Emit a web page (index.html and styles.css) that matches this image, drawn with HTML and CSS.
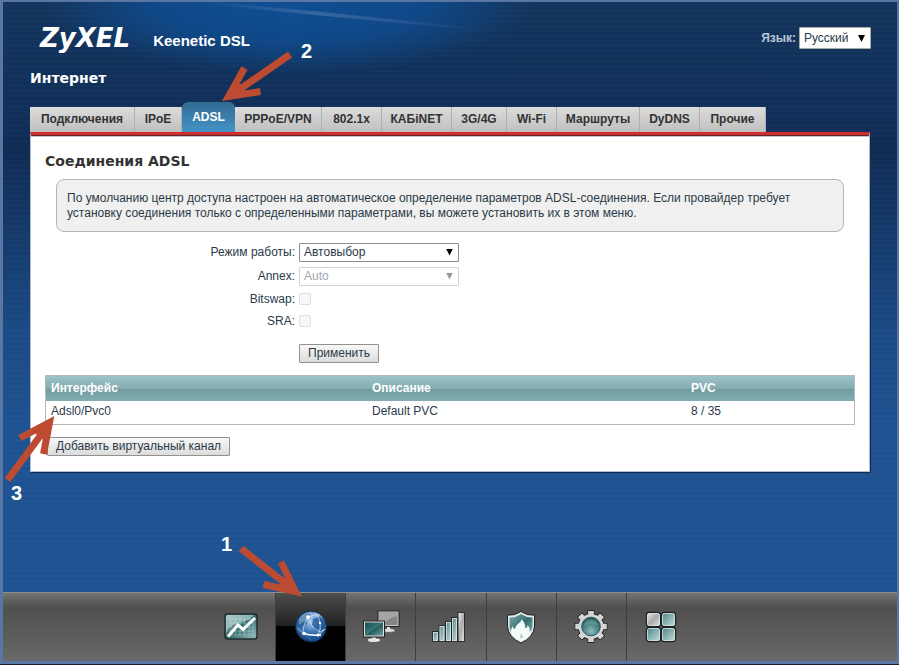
FILE: index.html
```html
<!DOCTYPE html>
<html lang="ru">
<head>
<meta charset="utf-8">
<title>ZyXEL Keenetic DSL</title>
<link rel="stylesheet" href="styles.css">
</head>
<body>
<div class="frame">
  <svg class="glow" viewBox="0 0 540 90" preserveAspectRatio="none" aria-hidden="true">
    <defs>
      <radialGradient id="halo" cx="0.53" cy="0" r="0.46" gradientTransform="scale(1 1.75)">
        <stop offset="0" stop-color="#0f4f94"/>
        <stop offset="0.55" stop-color="#0f4c8f" stop-opacity="0.85"/>
        <stop offset="1" stop-color="#0f4c8f" stop-opacity="0"/>
      </radialGradient>
      <linearGradient id="streak" x1="0" x2="1">
        <stop offset="0" stop-color="#6f8fbd" stop-opacity="0"/>
        <stop offset="0.4" stop-color="#7f94bd" stop-opacity="0.35"/>
        <stop offset="1" stop-color="#6f8fbd" stop-opacity="0"/>
      </linearGradient>
    </defs>
    <rect width="540" height="90" fill="url(#halo)"/>
    <path d="M190 -1 Q320 8 500 30 Q320 15 190 0Z" fill="url(#streak)"/>
  </svg>

  <header class="top">
    <div class="brand">
      <span class="logo">ZyXEL</span>
      <span class="model">Keenetic DSL</span>
    </div>
    <div class="language">
      <label for="lang">Язык:</label>
      <span class="select select-lang"><select id="lang"><option>Русский</option></select></span>
    </div>
  </header>

  <main>
    <h1>Интернет</h1>
    <nav class="tabs">
      <a href="#">Подключения</a>
      <a href="#">IPoE</a>
      <a href="#" class="active">ADSL</a>
      <a href="#">PPPoE/VPN</a>
      <a href="#">802.1x</a>
      <a href="#">КАБiNET</a>
      <a href="#">3G/4G</a>
      <a href="#">Wi-Fi</a>
      <a href="#">Маршруты</a>
      <a href="#">DyDNS</a>
      <a href="#">Прочие</a>
      <span class="note note-two">
        <svg width="80" height="60" viewBox="220 45 80 60"><path d="M290 54.500 L230 96 M244.500 68 L228.500 96.500 L260.500 91.500"/><path class="head" d="M228.500 96.500 L237 81 L243 86 L246 94Z"/></svg>
        <b>2</b>
      </span>
    </nav>

    <section class="panel">
      <h2>Соединения ADSL</h2>
      <p class="hint">По умолчанию центр доступа настроен на автоматическое определение параметров ADSL-соединения. Если провайдер требует установку соединения только с определенными параметрами, вы можете установить их в этом меню.</p>

      <form class="form">
        <label for="mode">Режим работы:</label>
        <span class="select"><select id="mode"><option>Автовыбор</option></select></span>
        <label for="annex">Annex:</label>
        <span class="select off"><select id="annex" disabled><option>Auto</option></select></span>
        <label for="bitswap">Bitswap:</label>
        <input type="checkbox" id="bitswap" disabled>
        <label for="sra">SRA:</label>
        <input type="checkbox" id="sra" disabled>
        <button type="button" class="apply">Применить</button>
      </form>

      <table>
        <thead><tr><th>Интерфейс</th><th>Описание</th><th>PVC</th></tr></thead>
        <tbody><tr><td>Adsl0/Pvc0</td><td>Default PVC</td><td>8 / 35</td></tr></tbody>
      </table>
      <div class="actions">
        <button type="button">Добавить виртуальный канал</button>
        <span class="note note-three">
          <svg width="60" height="70" viewBox="0 415 60 70"><path d="M7.500 480 L49 424 M20 438 L49.500 422.500 L43.500 454"/><path class="head" d="M49.500 422.500 L34 431 L39 438 L46 440Z"/></svg>
          <b>3</b>
        </span>
      </div>
    </section>
  </main>

  <footer class="dock">
    <svg class="defs" width="0" height="0" aria-hidden="true">
      <defs>
        <linearGradient id="teal" x1="0" y1="0" x2="1" y2="1"><stop offset="0" stop-color="#7fa9a9"/><stop offset="0.5" stop-color="#326c6e"/><stop offset="1" stop-color="#9bc4c2"/></linearGradient>
        <linearGradient id="screen" x1="0" y1="0" x2="1" y2="1"><stop offset="0" stop-color="#174c4f"/><stop offset="0.5" stop-color="#38797a"/><stop offset="0.52" stop-color="#23585a"/><stop offset="1" stop-color="#6ba09f"/></linearGradient>
        <linearGradient id="gray" x1="0" y1="0" x2="1" y2="1"><stop offset="0" stop-color="#eee"/><stop offset="0.5" stop-color="#aaa"/><stop offset="1" stop-color="#e2e2e2"/></linearGradient>
        <linearGradient id="tile" x1="0" y1="0" x2="1" y2="1"><stop offset="0" stop-color="#4d8687"/><stop offset="1" stop-color="#c3dddb"/></linearGradient>
        <radialGradient id="globe" cx="0.5" cy="0.35" r="0.65"><stop offset="0" stop-color="#a9cdf2"/><stop offset="0.5" stop-color="#3f78b8"/><stop offset="1" stop-color="#123c73"/></radialGradient>
        <radialGradient id="lens" cx="0.5" cy="0.75" r="0.7"><stop offset="0" stop-color="#8fbcbb"/><stop offset="0.6" stop-color="#478081"/><stop offset="1" stop-color="#25595b"/></radialGradient>
      </defs>
    </svg>
    <nav class="dock-items">
      <a href="#" aria-label="Монитор">
        <svg class="icon" viewBox="0 0 40 40">
          <rect x="4" y="7" width="32" height="25" rx="2.500" fill="url(#teal)" stroke="#222b2b" stroke-width="1.500"/>
          <path d="M5 27V10Q5 8 7 8H33Q28 14 18 16T5 27Z" fill="#dff0ef" opacity="0.5"/>
          <path d="M10 11V28M14.500 11V28M19 11V28M23.500 11V28M28 11V28M32 11V28M8 12H33M8 16H33M8 20H33M8 24H33M8 28H33" stroke="#d2e5e4" stroke-width="0.6" opacity="0.6"/>
          <path d="M7 29.500L17 18L22 22.500L34 11" fill="none" stroke="#fff" stroke-width="3"/>
        </svg>
      </a>
      <a href="#" class="current" aria-label="Интернет">
        <svg class="icon" viewBox="0 0 40 40">
          <circle cx="20" cy="19.500" r="15.500" fill="url(#globe)" stroke="#0d2b52"/>
          <path d="M7 14Q11 6 18 6L20 9L15 13L16 17L10 20L7 19ZM22 12L29 10L34 17L33 23L28 21L25 24L21 18Z" fill="#1f568f" opacity="0.7"/>
          <path d="M17 10Q24 7 29 8M17 10Q19 20 29 25L34 22M17 10Q10 22 13 27L27 29L34 22M27 29Q33 15 24 6M20 33Q13 27 6 21" fill="none" stroke="#d9ebfb" stroke-width="0.8" opacity="0.85"/>
          <path d="M13 27L27 29L33 27Q28 35 20 34Q13 32 13 27Z" fill="#1c569b" opacity="0.7"/>
          <path d="M12 26Q19 29 30 28" fill="none" stroke="#fff" stroke-width="1.500"/>
          <g fill="#fff"><circle cx="17" cy="10" r="1.800"/><circle cx="13" cy="26.500" r="1.800"/><circle cx="27" cy="28" r="1.500"/><circle cx="29" cy="16" r="1.200"/></g>
          <path d="M8 12Q13 4 21 5Q28 5 32 11Q20 8 8 18Z" fill="#fff" opacity="0.3"/>
        </svg>
      </a>
      <a href="#" aria-label="Домашняя сеть">
        <svg class="icon" viewBox="0 0 40 40">
          <path d="M25.500 18H29.500V21.500Q34 21.500 34 23.500T28 25.500T22 23.500T25.500 21.500Z" fill="#ddd" stroke="#333" stroke-width="0.6"/>
          <rect x="17" y="4" width="21" height="15.500" fill="#c9c9c9" stroke="#222"/>
          <rect x="18.500" y="5.500" width="18" height="12.500" fill="#858585"/>
          <path d="M18.500 5.500H36.500V9Q28 10 22 18H18.500Z" fill="#a5a5a5"/>
          <path d="M11 29H15V31Q19.500 31 19.500 33.200T13 35.500T6.500 33.200T11 31Z" fill="#e6e6e6" stroke="#333" stroke-width="0.6"/>
          <rect x="2.500" y="14" width="21" height="16" fill="#dedede" stroke="#222"/>
          <rect x="4" y="15.500" width="18" height="13" fill="url(#screen)"/>
        </svg>
      </a>
      <a href="#" aria-label="Сеть Wi-Fi">
        <svg class="icon" viewBox="0 0 40 40">
          <g fill="url(#tile)" stroke="#222" stroke-width="1.600" paint-order="stroke">
            <rect x="2" y="25" width="5" height="9"/><rect x="8.500" y="19" width="5" height="15"/><rect x="15" y="15" width="5" height="19"/><rect x="21" y="11" width="5" height="23"/><rect x="27.500" y="6" width="5.500" height="28" fill="url(#gray)"/>
          </g>
          <g fill="none" stroke="#d7e8e7" stroke-width="0.8"><rect x="2.500" y="25.500" width="4" height="8"/><rect x="9" y="19.500" width="4" height="14"/><rect x="15.500" y="15.500" width="4" height="18"/><rect x="21.500" y="11.500" width="4" height="22"/></g>
        </svg>
      </a>
      <a href="#" aria-label="Безопасность">
        <svg class="icon" viewBox="0 0 40 40">
          <path d="M20 4.500Q26 9 33.500 8V19Q33 30 20 36Q7 30 6.500 19V8Q14 9 20 4.500Z" fill="#e4eceb" stroke="#222"/>
          <path d="M20 7Q26 11 31.500 10.500V19Q31 29 20 33.500Q9 29 8.500 19V10.500Q14 11 20 7Z" fill="url(#teal)"/>
          <path d="M12 29Q8 24 12 19Q12 22 14 22Q15 18 18 16Q21 14 20 12Q25 16 24 21Q27 21 26.500 18Q30 22 28 25Q31 23 30 21Q32 30 20 34Q15 33 12 29Z" fill="#f5fafa"/>
          <path d="M20 32Q18 29 20.500 26Q20.500 29 22.500 29Q22 31 20 32Z" fill="#b5cfcd"/>
        </svg>
      </a>
      <a href="#" aria-label="Система">
        <svg class="icon" viewBox="0 0 40 40">
          <g transform="translate(20 19.500)">
            <g fill="#d3d5d5" stroke="#222" stroke-width="1.800" paint-order="stroke">
              <path id="tooth" d="M-3 -10L-2.500 -15.500H2.500L3 -10ZM-3 10L-2.500 15.500H2.500L3 10ZM-10 -3L-15.500 -2.500V2.500L-10 3ZM10 -3L15.500 -2.500V2.500L10 3Z"/>
              <use href="#tooth" transform="rotate(45)"/>
              <circle r="12.500"/>
            </g>
            <path d="M-3 -10L-2.500 -15.500H2.500L3 -10ZM-3 10L-2.500 15.500H2.500L3 10ZM-10 -3L-15.500 -2.500V2.500L-10 3ZM10 -3L15.500 -2.500V2.500L10 3Z" fill="#d3d5d5"/>
            <path d="M-3 -10L-2.500 -15.500H2.500L3 -10ZM-3 10L-2.500 15.500H2.500L3 10ZM-10 -3L-15.500 -2.500V2.500L-10 3ZM10 -3L15.500 -2.500V2.500L10 3Z" fill="#d3d5d5" transform="rotate(45)"/>
            <circle r="9.300" fill="url(#lens)" stroke="#2a5557"/>
            <path d="M-7 -1Q-6 -7 0 -7T7 -1Q0 -4 -7 -1Z" fill="#dff" opacity="0.18"/>
          </g>
        </svg>
      </a>
      <a href="#" aria-label="Приложения">
        <svg class="icon" viewBox="0 0 40 40">
          <g stroke="#202020" stroke-width="2.400" paint-order="stroke" fill="url(#tile)">
            <rect x="6" y="6" width="13" height="13" rx="2.500" fill="url(#gray)"/><rect x="21" y="6" width="13" height="13" rx="2.500"/><rect x="6" y="21" width="13" height="13" rx="2.500"/><rect x="21" y="21" width="13" height="13" rx="2.500"/>
          </g>
          <g fill="none" stroke="#d5e6e5" stroke-width="0.8"><rect x="6.500" y="6.500" width="12" height="12" rx="2"/><rect x="21.500" y="6.500" width="12" height="12" rx="2"/><rect x="6.500" y="21.500" width="12" height="12" rx="2"/><rect x="21.500" y="21.500" width="12" height="12" rx="2"/></g>
        </svg>
      </a>
      <span class="note note-one">
        <svg width="70" height="60" viewBox="235 540 70 60"><path d="M241 548.500 L295 591 M281 562 L295.500 591.500 L263.500 584.500"/><path class="head" d="M295.500 591.500 L288 576 L282 580 L278 588Z"/></svg>
        <b>1</b>
      </span>
    </nav>
  </footer>
</div>
</body>
</html>
```
FILE: styles.css
```css
* { box-sizing: border-box; }

body {
  margin: 0;
  background: #16202e;
  font: 12px/15px "Liberation Sans", Arial, sans-serif;
  color: #2b3a48;
}

.frame {
  position: relative;
  display: flex;
  flex-direction: column;
  min-height: calc(100vh - 1px);
  margin-bottom: 1px;
  border: solid #5a76a2;
  border-width: 2px 2px 3px 3px;
  background:
    repeating-linear-gradient(transparent 0 3px, rgba(255, 255, 255, 0.015) 3px 5px),
    linear-gradient(#13345c 0, #10305a 90px, #0f2c55 150px, #1b4a85 330px, #1e5291 430px, #1e5291 100%);
}

.glow {
  position: absolute;
  top: 0;
  left: 0;
  width: 540px;
  height: 90px;
}

.top {
  position: relative;
  display: flex;
  justify-content: space-between;
  align-items: center;
  padding: 20px 26px 0 37px;
}

.brand {
  display: flex;
  align-items: center;
  gap: 23px;
  color: #fff;
  font-weight: bold;
}

.logo {
  font: italic bold 26px/32px "DejaVu Sans", Verdana, sans-serif;
}

.model {
  padding-top: 6px;
  font-size: 15px;
  line-height: 18px;
}

.language {
  display: flex;
  align-items: center;
  gap: 3px;
}

.language label {
  color: #b9c6d6;
  font-weight: bold;
}

.select {
  position: relative;
  display: block;
  width: 160px;
}

.select::after {
  content: "";
  position: absolute;
  top: 6px;
  right: 6px;
  width: 7px;
  height: 7px;
  background: #000;
  clip-path: polygon(0 0, 100% 0, 50% 100%);
  pointer-events: none;
}

.select select {
  display: block;
  width: 100%;
  height: 19px;
  padding: 0 4px;
  border: 1px solid #8d8d8d;
  border-radius: 1px;
  background: #fff;
  color: #2b3a48;
  font: inherit;
  appearance: none;
}

.select.off select {
  border-color: #d2d2d2;
  color: #a3a8ad;
  opacity: 1;
}

.select.off::after { background: #999; }

.select-lang { width: 72px; }
.select-lang select { height: 22px; border-color: #aaa; }
.select-lang::after { top: 8px; }

main {
  position: relative;
  padding: 0 27px;
}

h1, h2 {
  margin: 0;
  font: bold 14px/18px "DejaVu Sans", Verdana, sans-serif;
}

h1 {
  padding: 15px 0;
  color: #fff;
}

.tabs {
  position: relative;
  display: grid;
  grid-template-columns: 105px 47px 53px 87px 60px 70px 55px 50px 83px 60px 66px;
  align-items: end;
  height: 30px;
}

.tabs a {
  height: 25px;
  border-right: 1px solid #aeb0b1;
  background: linear-gradient(#dcdcdc, #bfbfbf);
  color: #333;
  font-weight: bold;
  line-height: 24px;
  text-align: center;
  text-decoration: none;
  white-space: nowrap;
}

.tabs .active {
  height: 30px;
  border: 0;
  border-radius: 6px 6px 0 0;
  background: linear-gradient(#336a90, #3a7fae 50%, #4494c8);
  color: #fff;
  line-height: 30px;
}

.panel {
  padding: 17px 14px 15px;
  border: 1px solid #b0bccb;
  border-top: 3px solid #d02c2c;
  background: #fff;
  box-shadow: inset 0 1px #63242e, inset 0 2px #bcc7d3, 1px 1px #12294c;
}

h2 { color: #333; }

.hint {
  margin: 9px 11px 8px;
  padding: 11px 10px 10px;
  border: 1px solid #b5b5b5;
  border-radius: 8px;
  background: #f0f0f0;
}

.form {
  display: grid;
  grid-template-columns: 250px 1fr;
  grid-template-rows: 24px 24px 22px 22px;
  gap: 0 4px;
  align-items: center;
}

.form label { text-align: right; }

.form input {
  width: 12px;
  height: 12px;
  margin: 0;
  border: 1px solid #ddd;
  border-radius: 2px;
  background: #f7f7f7;
  appearance: none;
}

button {
  height: 19px;
  padding: 0 8px;
  border: 1px solid #919191;
  border-radius: 1px;
  background: linear-gradient(#f8f8f8, #dcdcdc);
  color: #2b3a48;
  font: inherit;
}

.apply {
  grid-column: 2;
  justify-self: start;
  margin: 12px 0;
}

table {
  width: 100%;
  table-layout: fixed;
  border: 1px solid #b5b9b9;
  border-spacing: 0;
}

th, td {
  padding: 0 5px;
  text-align: left;
}

th:first-child { width: 321px; }
th:nth-child(2) { width: 319px; }

thead {
  background: linear-gradient(#9cc3c7, #84acaf 50%, #6f9b9e 50%, #83adb0);
}

th {
  height: 25px;
  color: #fff;
}

td {
  height: 23px;
  padding-bottom: 2px;
}

.actions {
  position: relative;
  margin: 12px 2px 0;
}

.actions button { display: block; }

/* Numbered pointers laid over the page */
.note {
  position: absolute;
  z-index: 2;
  pointer-events: none;
}

.note svg {
  display: block;
  fill: none;
  stroke: #bd4b32;
  stroke-width: 7;
  stroke-miterlimit: 10;
}

.note .head {
  fill: #bd4b32;
  stroke: none;
}

.note b {
  position: absolute;
  color: #fff;
  font-size: 20px;
  line-height: 22px;
}

.note-two { left: 190px; top: -57px; }
.note-two b { left: 81px; top: -5px; }

.note-three { left: -47px; top: -22px; }
.note-three b { left: 11px; top: 67px; }

.note-one { left: 29px; top: -53px; }
.note-one b { left: -14px; top: -7px; }

.dock {
  height: 69px;
  margin-top: auto;
  padding-left: 2px;
  border-top: 1px solid #8d8d8d;
  background: linear-gradient(#737373, #4f4f4f 22%, #696969);
}

.defs { position: absolute; }

.dock-items {
  position: relative;
  display: flex;
  width: 490px;
  height: 68px;
  margin: 0 auto;
}

.dock-items a {
  display: flex;
  flex: 1;
  align-items: center;
  justify-content: center;
  border-right: 1px solid #3e3e3e;
}

.dock-items a:nth-child(7) { border-right: 0; }

.dock-items .current {
  background: linear-gradient(#4d4d4d, #222 48%, #000 49%);
}

.icon {
  width: 40px;
  height: 40px;
}
```
